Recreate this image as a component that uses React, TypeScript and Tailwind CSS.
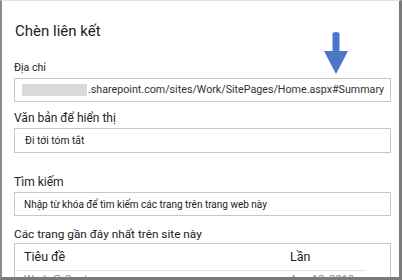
const font = { fontFamily: 'Roboto, "Noto Sans", sans-serif' };

const Arrow = () => (
  <svg className="absolute left-[321px] top-[31px]" width="26" height="43" viewBox="0 0 26 43">
    <path d="M9.5 2 Q9.5 0 13 0 Q16.5 0 16.5 2 L16.5 19 L25 19 L13 42 L1 19 L9.5 19 Z" fill="#4a78c9" />
  </svg>
);

export default function App() {
  return (
    <div
      className="relative w-[402px] h-[280px] overflow-hidden bg-white border-l-2 border-r-[3px] border-b-[3px] border-t border-l-[#8a8a8a] border-r-[#7a7a7a] border-b-[#7a7a7a] border-t-[#e2e2e2] text-[#222]"
      style={font}
    >
      <div className="flex flex-col pl-3 pr-[8px]">
        <div className="mt-[19px] h-[22px] text-[15px] leading-[22px] pl-[1px]">Chèn liên kết</div>

        <div className="mt-[18px] h-[16px] text-[10.5px] leading-[16px]">Địa chỉ</div>
        <div className="mt-[2px] h-[24px] border border-[#c6c6c6] flex items-center pl-[7px] text-[10.7px] text-[#333] whitespace-nowrap">
          <span className="shrink-0 w-[65px] h-[12px] bg-[#d9d9d9] mr-[1px]" />
          <span>.sharepoint.com/sites/Work/SitePages/Home.aspx#Summary</span>
        </div>

        <div className="mt-[7px] h-[18px] text-[12px] leading-[18px]">Văn bản để hiển thị</div>
        <div className="mt-[1px] h-[25px] border border-[#c6c6c6] flex items-center pl-[10px] text-[10.3px] text-[#222]">
          Đi tới tóm tắt
        </div>

        <div className="mt-[20px] h-[18px] text-[12px] leading-[18px]">Tìm kiếm</div>
        <div className="mt-[1px] h-[24px] border border-[#c6c6c6] flex items-center pl-[9px] text-[10px] text-[#222]">
          Nhập từ khóa để tìm kiếm các trang trên trang web này
        </div>

        <div className="mt-[9px] h-[18px] text-[11.8px] leading-[18px]">Các trang gần đây nhất trên site này</div>
        <div className="h-[60px] border border-[#c6c6c6] flex flex-col">
          <div className="flex h-[27px] items-center text-[12.5px] text-[#222] mx-[2px] border-b border-[#e4e4e4] mr-[24px]">
            <span className="pl-[7px] w-[273px]">Tiêu đề</span>
            <span>Lần</span>
          </div>
          <div className="flex h-[18px] items-center text-[11px] text-[#8a8a8a] mx-[2px]">
            <span className="pl-[7px] w-[273px]">Work @ Contoso</span>
            <span>Aug 13, 2019</span>
          </div>
        </div>
      </div>
      <Arrow />
    </div>
  );
}
